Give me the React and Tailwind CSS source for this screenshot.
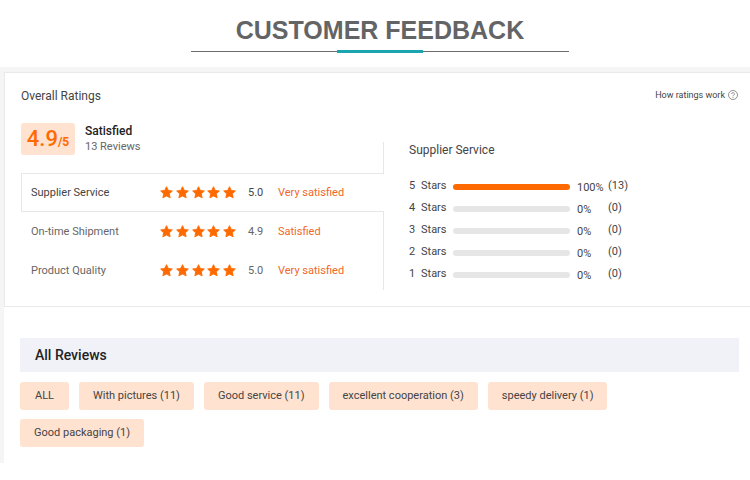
import React, { useState } from "react";
import clsx from "clsx";

const ratings = [
  { name: "Supplier Service", score: "5.0", label: "Very satisfied" },
  { name: "On-time Shipment", score: "4.9", label: "Satisfied" },
  { name: "Product Quality", score: "5.0", label: "Very satisfied" },
];

const breakdown = [
  { stars: 5, percent: 100, count: 13 },
  { stars: 4, percent: 0, count: 0 },
  { stars: 3, percent: 0, count: 0 },
  { stars: 2, percent: 0, count: 0 },
  { stars: 1, percent: 0, count: 0 },
];

const tags = [
  "ALL",
  "With pictures (11)",
  "Good service (11)",
  "excellent cooperation (3)",
  "speedy delivery (1)",
  "Good packaging (1)",
];

const Star = () => (
  <svg viewBox="0 0 24 24" className="h-[13px] w-[13px]" fill="#ff6a00" aria-hidden="true">
    <path
      d="M12 1.2l3.3 6.9 7.5 1-5.5 5.3 1.4 7.5L12 18.3l-6.7 3.6 1.4-7.5L1.2 9.1l7.5-1z"
      stroke="#ff6a00"
      strokeWidth="1.6"
      strokeLinejoin="round"
    />
  </svg>
);

const Header = () => (
  <header className="flex h-[67px] flex-col items-center pt-[14px] pl-[10px]">
    <h1 className="font-['Liberation_Sans',sans-serif] text-[25px] leading-8 font-bold text-[#636466]">
      CUSTOMER FEEDBACK
    </h1>
    <div className="mt-1 flex w-full max-w-[378px] items-center">
      <span className="h-px flex-1 bg-[#6b6b6b]" />
      <span className="h-[3px] w-[86px] bg-[#1ba5b0]" />
      <span className="h-px flex-1 bg-[#6b6b6b]" />
    </div>
  </header>
);

const Summary = () => (
  <div className="flex h-[50px] justify-between">
    <div className="flex items-start gap-[10px]">
      <div className="flex h-8 w-[54px] items-baseline justify-center rounded-[3px] bg-[#ffe2d0] text-[#ff6a00]">
        <span className="text-[22px] leading-8 font-medium">4.9</span>
        <span className="text-[12px] font-bold">/5</span>
      </div>
      <div className="leading-4">
        <p className="text-[12px] font-medium text-[#222]">Satisfied</p>
        <p className="text-[11px] text-[#666]">13 Reviews</p>
      </div>
    </div>
    <span className="h-[31px] w-px self-end bg-[#e6e7eb]" />
  </div>
);

const RatingRow = ({ item, active, onSelect }) => (
  <button
    type="button"
    onClick={onSelect}
    className={clsx(
      "flex h-[39px] w-full items-center border-[#e6e7eb] text-left text-[11px]",
      active ? "border-y border-l pl-[9px] text-[#444]" : "border-r pl-[10px] text-[#666]"
    )}
  >
    <span className="w-[129px] pt-[2px]">{item.name}</span>
    <span className="flex w-[76px] justify-between">
      {[1, 2, 3, 4, 5].map((n) => (
        <Star key={n} />
      ))}
    </span>
    <span className="w-[42px] pt-[2px] pl-3">{item.score}</span>
    <span className="pt-[2px] text-[#f0672b]">{item.label}</span>
  </button>
);

const Breakdown = ({ title }) => (
  <section className="pt-[19px]">
    <h3 className="text-[12px] leading-4 text-[#444]">{title}</h3>
    <table className="mt-5 text-[11px] leading-4 text-[#444]">
      <tbody>
        {breakdown.map((row) => (
          <tr key={row.stars} className="h-[22px] align-top">
            <th scope="row" className="w-11 text-left font-normal">
              <span className="inline-block w-3">{row.stars}</span>Stars
            </th>
            <td className="pt-[6px]">
              <div className="h-[6px] w-[117px] overflow-hidden rounded-full bg-[#e6e6e6]">
                <div className="h-full bg-[#ff6a00]" style={{ width: `${row.percent}%` }} />
              </div>
            </td>
            <td className="w-[38px] pt-[2px] pl-[7px]">{row.percent}%</td>
            <td>({row.count})</td>
          </tr>
        ))}
      </tbody>
    </table>
  </section>
);

export default function App() {
  const [selected, setSelected] = useState(0);

  return (
    <div className="bg-white font-[Roboto,sans-serif]">
      <Header />
      <main className="bg-[#f5f5f5] pt-[5px] pl-1">
        <section className="border-y border-l border-[#e9e9e9] bg-white pr-3 pb-4 pl-4">
          <div className="flex items-start justify-between pt-[15px]">
            <h2 className="text-[12px] leading-4 text-[#444]">Overall Ratings</h2>
            <a href="#ratings" className="flex items-center gap-[3px] text-[9px] leading-[14px] text-[#444]">
              How ratings work
              <svg viewBox="0 0 20 20" className="h-[10px] w-[10px]" fill="none" stroke="#777" aria-hidden="true">
                <circle cx="10" cy="10" r="9" strokeWidth="1.6" />
                <path d="M7.3 8a2.7 2.7 0 1 1 4 2.3c-.9.5-1.3 1-1.3 2" strokeWidth="1.6" />
                <path d="M10 13.8v1.8" strokeWidth="1.8" />
              </svg>
            </a>
          </div>
          <div className="mt-[19px] flex gap-[25px]">
            <div className="w-[363px]">
              <Summary />
              {ratings.map((item, i) => (
                <RatingRow
                  key={item.name}
                  item={item}
                  active={i === selected}
                  onSelect={() => setSelected(i)}
                />
              ))}
            </div>
            <Breakdown title={ratings[selected].name} />
          </div>
        </section>
        <section className="bg-white pt-[31px] pr-[11px] pb-4 pl-4">
          <h2 className="bg-[#f1f2f7] px-[15px] text-[14px] leading-[34px] font-medium text-[#222]">
            All Reviews
          </h2>
          <div className="mt-[10px] flex flex-wrap gap-x-[10px] gap-y-[9px]">
            {tags.map((tag) => (
              <button
                key={tag}
                type="button"
                className="h-7 min-w-[49px] rounded-[3px] bg-[#ffe2d0] px-[14px] text-[11px] text-[#444]"
              >
                {tag}
              </button>
            ))}
          </div>
        </section>
      </main>
    </div>
  );
}
